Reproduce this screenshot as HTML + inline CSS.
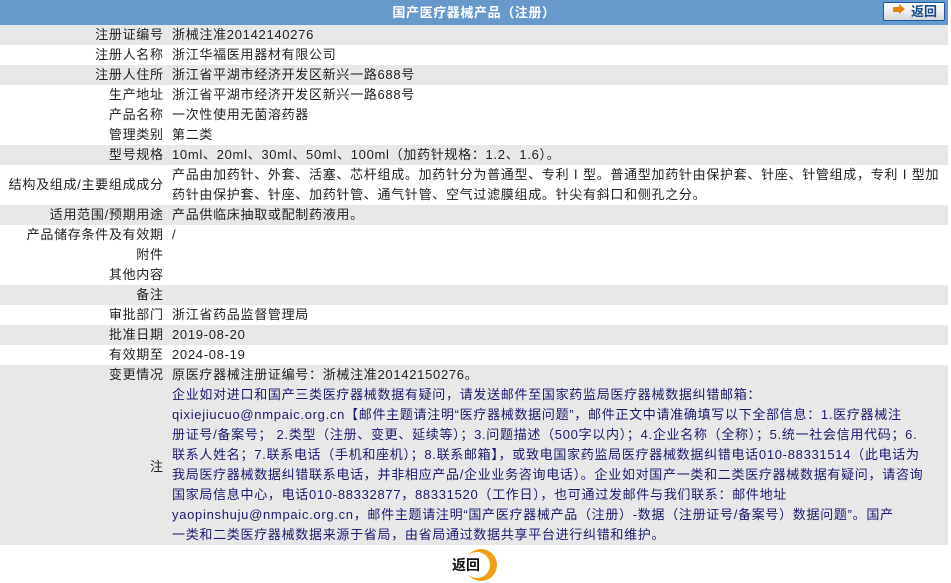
<!DOCTYPE html>
<html><head><meta charset="utf-8"><style>
body{margin:0;width:951px;height:583px;background:#fff;font-family:"Liberation Sans","Noto Sans CJK SC",sans-serif;font-size:13px;color:#222;position:relative;overflow:hidden}
.hd{position:absolute;left:0;top:0;width:948px;height:25px;background:#6699cc;color:#fff;font-weight:bold;text-align:center;line-height:25px;font-size:13px;letter-spacing:0.6px}
.btn{position:absolute;left:883px;top:2px;width:60px;height:17px;border:1px solid #1f5aa0;border-radius:2px;background:linear-gradient(#fff,#d8d8d8);}
.btn .ar{position:absolute;left:9px;top:4px;width:6px;height:5px;background:#e8820c}
.btn .ar:after{content:"";position:absolute;left:6px;top:-3px;border-left:6px solid #e8820c;border-top:5.5px solid transparent;border-bottom:5.5px solid transparent}
.btn b{position:absolute;left:27px;top:0;line-height:17px;color:#1a4c90;font-size:13px}
.r{position:absolute;left:0;width:948px;}
.g{background:#e8e8e8}
.l{position:absolute;right:785px;white-space:nowrap;line-height:20px;letter-spacing:0.7px;margin-right:-0.7px}
.v{position:absolute;left:172px;white-space:nowrap;line-height:20px;letter-spacing:0.7px}
.n{color:#1a1a70}
</style></head><body>
<div class="hd">国产医疗器械产品（注册）</div>
<div class="btn"><span class="ar"></span><b>返回</b></div>

<div class="r g" style="top:25px;height:20px"><span class="l">注册证编号</span><span class="v">浙械注准20142140276</span></div>
<div class="r" style="top:45px;height:20px"><span class="l">注册人名称</span><span class="v">浙江华福医用器材有限公司</span></div>
<div class="r g" style="top:65px;height:20px"><span class="l">注册人住所</span><span class="v">浙江省平湖市经济开发区新兴一路688号</span></div>
<div class="r" style="top:85px;height:20px"><span class="l">生产地址</span><span class="v">浙江省平湖市经济开发区新兴一路688号</span></div>
<div class="r" style="top:105px;height:20px"><span class="l">产品名称</span><span class="v">一次性使用无菌溶药器</span></div>
<div class="r" style="top:125px;height:20px"><span class="l">管理类别</span><span class="v">第二类</span></div>
<div class="r g" style="top:145px;height:20px"><span class="l">型号规格</span><span class="v">10ml、20ml、30ml、50ml、100ml（加药针规格：1.2、1.6）。</span></div>
<div class="r" style="top:165px;height:40px"><span class="l" style="top:10px">结构及组成/主要组成成分</span><span class="v">产品由加药针、外套、活塞、芯杆组成。加药针分为普通型、专利Ⅰ型。普通型加药针由保护套、针座、针管组成，专利Ⅰ型加<br>药针由保护套、针座、加药针管、通气针管、空气过滤膜组成。针尖有斜口和侧孔之分。</span></div>
<div class="r g" style="top:205px;height:20px"><span class="l">适用范围/预期用途</span><span class="v">产品供临床抽取或配制药液用。</span></div>
<div class="r" style="top:225px;height:20px"><span class="l">产品储存条件及有效期</span><span class="v">/</span></div>
<div class="r" style="top:245px;height:20px"><span class="l">附件</span></div>
<div class="r" style="top:265px;height:20px"><span class="l">其他内容</span></div>
<div class="r g" style="top:285px;height:20px"><span class="l">备注</span></div>
<div class="r" style="top:305px;height:20px"><span class="l">审批部门</span><span class="v">浙江省药品监督管理局</span></div>
<div class="r g" style="top:325px;height:20px"><span class="l">批准日期</span><span class="v">2019-08-20</span></div>
<div class="r" style="top:345px;height:20px"><span class="l">有效期至</span><span class="v">2024-08-19</span></div>
<div class="r g" style="top:365px;height:20px"><span class="l">变更情况</span><span class="v">原医疗器械注册证编号：浙械注准20142150276。</span></div>
<div class="r g" style="top:385px;height:160px"><span class="l" style="top:72px">注</span><span class="v n">企业如对进口和国产三类医疗器械数据有疑问，请发送邮件至国家药监局医疗器械数据纠错邮箱：<br>qixiejiucuo@nmpaic.org.cn【邮件主题请注明“医疗器械数据问题”，邮件正文中请准确填写以下全部信息：1.医疗器械注<br>册证号/备案号； 2.类型（注册、变更、延续等）；3.问题描述（500字以内）；4.企业名称（全称）；5.统一社会信用代码；6.<br>联系人姓名；7.联系电话（手机和座机）；8.联系邮箱】，或致电国家药监局医疗器械数据纠错电话010-88331514（此电话为<br>我局医疗器械数据纠错联系电话，并非相应产品/企业业务咨询电话）。企业如对国产一类和二类医疗器械数据有疑问，请咨询<br>国家局信息中心，电话010-88332877，88331520（工作日），也可通过发邮件与我们联系：邮件地址<br>yaopinshuju@nmpaic.org.cn，邮件主题请注明“国产医疗器械产品（注册）-数据（注册证号/备案号）数据问题”。国产<br>一类和二类医疗器械数据来源于省局，由省局通过数据共享平台进行纠错和维护。</span></div>

<svg style="position:absolute;left:462px;top:548px" width="36" height="34" viewBox="0 0 36 34"><circle cx="19" cy="17" r="16" fill="#f0a010"/><circle cx="15" cy="17" r="13" fill="#fff"/></svg>
<div style="position:absolute;left:452px;top:555px;font-weight:bold;font-size:14px;color:#111">返回</div>
</body></html>
